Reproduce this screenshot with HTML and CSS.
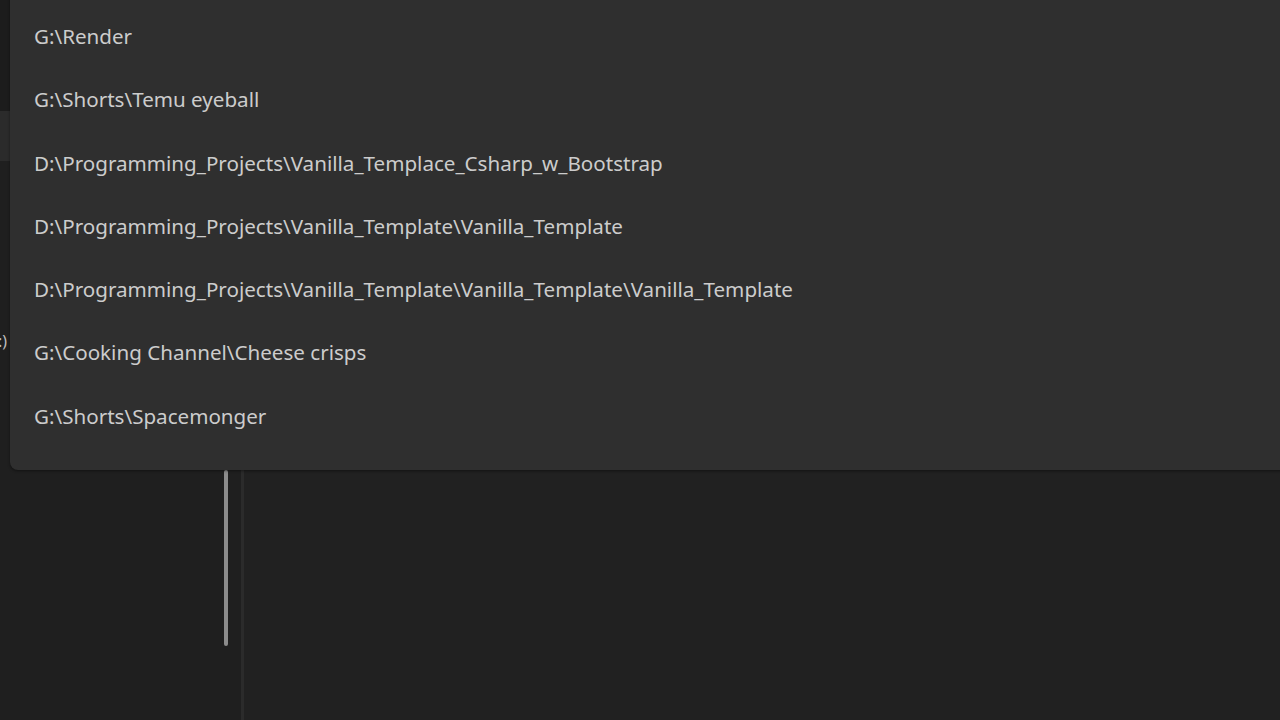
FILE: index.html
```html
<!DOCTYPE html>
<html>
<head>
<meta charset="utf-8">
<link rel="stylesheet" href="styles.css">
</head>
<body>
<div class="app">
  <aside class="sidebar">
    <div class="side-top"></div>
    <div class="side-sel"></div>
    <div class="side-rest"><span class="smile">:)</span></div>
    <div class="scrollbar"><div class="thumb"></div></div>
  </aside>
  <div class="divider"></div>
  <main class="editor"></main>
</div>
<div class="popup">
  <ul class="list">
    <li>G:\Render</li>
    <li>G:\Shorts\Temu eyeball</li>
    <li>D:\Programming_Projects\Vanilla_Templace_Csharp_w_Bootstrap</li>
    <li>D:\Programming_Projects\Vanilla_Template\Vanilla_Template</li>
    <li>D:\Programming_Projects\Vanilla_Template\Vanilla_Template\Vanilla_Template</li>
    <li>G:\Cooking Channel\Cheese crisps</li>
    <li>G:\Shorts\Spacemonger</li>
  </ul>
</div>
</body>
</html>
```
FILE: styles.css
```css
html, body {
  margin: 0;
  padding: 0;
  width: 1280px;
  height: 720px;
  overflow: hidden;
  background: #202020;
  font-family: "Noto Sans", "Open Sans", sans-serif;
}
.app {
  display: flex;
  height: 720px;
}
.sidebar {
  width: 241px;
  position: relative;
  display: flex;
  flex-direction: column;
  background: #1f1f1f;
}
.side-top { height: 111px; background: #1c1c1c; }
.side-sel { height: 50px; background: #2b2b2b; }
.side-rest { flex: 1; background: #1f1f1f; }
.smile {
  display: block;
  margin-top: 170px;
  margin-left: -2px;
  color: #bdbdbd;
  font-size: 16px;
  line-height: 20px;
}
.scrollbar {
  position: absolute;
  left: 223px;
  top: 470px;
  width: 6px;
  height: 176px;
}
.thumb {
  width: 4px;
  height: 100%;
  margin-left: 1px;
  border-radius: 2px;
  background: #8c8c8c;
}
.divider {
  width: 3px;
  background: #2b2b2b;
}
.editor {
  flex: 1;
  background: #212121;
}
.popup {
  position: absolute;
  left: 10px;
  top: -10px;
  width: 1290px;
  height: 480px;
  background: #2f2f2f;
  border-radius: 8px;
  box-shadow: 0 1px 3px rgba(0,0,0,0.45);
}
.list {
  list-style: none;
  margin: 0;
  padding: 15px 0 0 0;
}
.list li {
  height: 63.3px;
  line-height: 63.3px;
  padding-left: 24px;
  color: #cccccc;
  font-size: 20.6px;
  white-space: nowrap;
}
```
